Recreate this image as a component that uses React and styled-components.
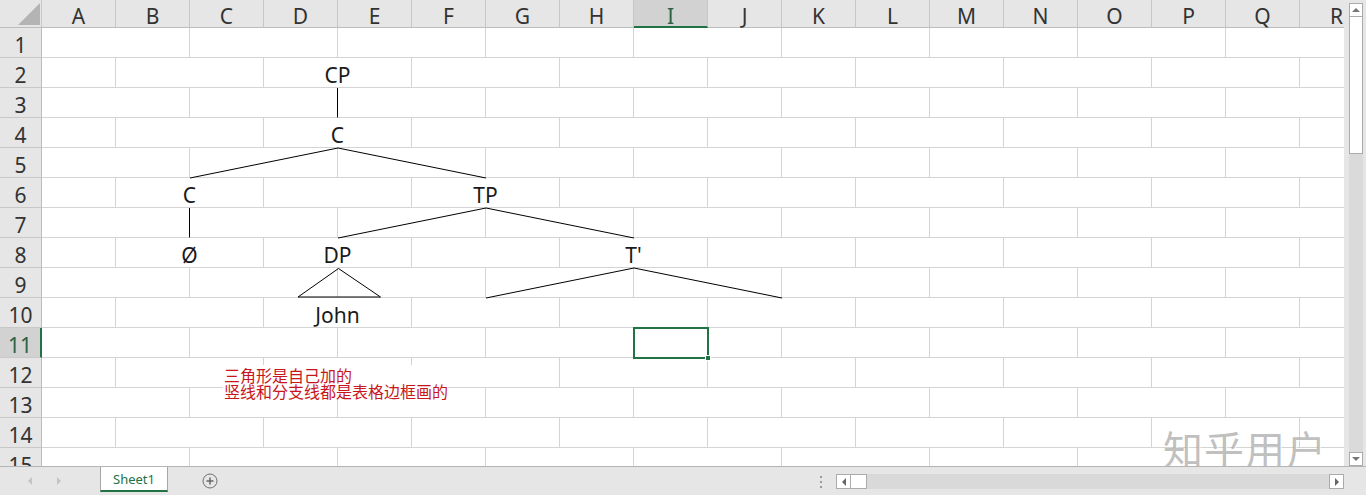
import React from 'react';
import styled, { createGlobalStyle } from 'styled-components';

const GREEN = '#217346';
const GRID = '#d4d4d4';
const HEAD_BG = '#e6e6e6';
const HEAD_SEL = '#d2d2d2';

const GlobalStyle = createGlobalStyle`
  html, body { margin: 0; padding: 0; background: #fff; }
  body { font-family: "Noto Sans", "Noto Sans CJK SC", sans-serif; }
  #root { width: 1366px; height: 495px; overflow: hidden; }
`;

const Root = styled.div`
  width: 1366px;
  height: 495px;
  display: flex;
  flex-direction: column;
  background: ${HEAD_BG};
  overflow: hidden;
`;

const Main = styled.div`
  display: flex;
  height: 466px;
  flex-shrink: 0;
`;

const Sheet = styled.div`
  position: relative;
  width: 1344px;
  height: 466px;
  flex-shrink: 0;
  overflow: hidden;
  background: #fff;
  display: flex;
  flex-direction: column;
`;

const HeaderRow = styled.div`
  display: flex;
  height: 28px;
  flex-shrink: 0;
`;

const Corner = styled.div`
  flex: 0 0 42px;
  height: 28px;
  box-sizing: border-box;
  background: ${HEAD_BG};
  border-right: 1px solid #c6c6c6;
  border-bottom: 1px solid #bdbdbd;
  display: flex;
  align-items: flex-end;
  justify-content: flex-end;
  padding: 0 1px 2px 0;
`;

const ColHead = styled.div`
  flex: 0 0 74px;
  height: 28px;
  box-sizing: border-box;
  background: ${p => (p.$sel ? HEAD_SEL : HEAD_BG)};
  border-right: 1px solid #c6c6c6;
  border-bottom: ${p => (p.$sel ? `2px solid ${GREEN}` : '1px solid #bdbdbd')};
  display: flex;
  align-items: center;
  justify-content: center;
  padding-top: ${p => (p.$sel ? 5 : 4)}px;
  font-size: 21px;
  line-height: 22px;
  color: ${p => (p.$sel ? '#2a6244' : '#333')};
`;

const Row = styled.div`
  display: flex;
  height: 30px;
  flex-shrink: 0;
`;

const RowHead = styled.div`
  flex: 0 0 42px;
  height: 30px;
  box-sizing: border-box;
  background: ${p => (p.$sel ? HEAD_SEL : HEAD_BG)};
  border-right: ${p => (p.$sel ? `2px solid ${GREEN}` : '1px solid #bdbdbd')};
  border-bottom: 1px solid #c8c8c8;
  display: flex;
  align-items: center;
  justify-content: center;
  padding-top: 6px;
  font-size: 21px;
  line-height: 23px;
  color: ${p => (p.$sel ? '#2a6244' : '#333')};
`;

const Cell = styled.div`
  position: relative;
  flex: 0 0 ${p => p.$span * 74}px;
  height: 30px;
  box-sizing: border-box;
  border-right: 1px solid ${p => (p.$edge ? '#000' : GRID)};
  border-bottom: 1px solid ${GRID};
  display: flex;
  align-items: center;
  justify-content: center;
  padding-top: 6px;
  font-size: 21px;
  line-height: 23px;
  color: #1a1a1a;
  white-space: nowrap;
`;

const Diag = styled.svg`
  position: absolute;
  left: 0;
  top: 0;
  width: calc(100% + 1px);
  height: calc(100% + 1px);
  overflow: visible;
  pointer-events: none;
`;

const SelBox = styled.div`
  position: absolute;
  left: 633px;
  top: 327px;
  width: 76px;
  height: 32px;
  box-sizing: border-box;
  border: 2px solid ${GREEN};
  pointer-events: none;
`;

const Handle = styled.div`
  position: absolute;
  left: 705px;
  top: 355px;
  width: 6px;
  height: 6px;
  box-sizing: border-box;
  background: ${GREEN};
  border: 1px solid #fff;
`;

const Shape = styled.svg`
  position: absolute;
  left: 297px;
  top: 268px;
  overflow: visible;
`;

const Note = styled.div`
  position: absolute;
  left: 223px;
  top: 365px;
  width: 225px;
  height: 33px;
  box-sizing: border-box;
  padding: 2px 0 0 1px;
  background: #fff;
  color: #c8161d;
  font-family: "Noto Sans CJK SC", "Noto Sans", sans-serif;
  font-size: 16px;
  line-height: 16px;
  white-space: nowrap;
`;

const Watermark = styled.div`
  position: absolute;
  left: 1163px;
  top: 428px;
  font-family: "Noto Sans CJK SC", sans-serif;
  font-size: 40px;
  line-height: 40px;
  color: rgba(150, 150, 150, 0.6);
  text-shadow: 1px 1px 0 rgba(255, 255, 255, 0.8);
  letter-spacing: 1px;
  pointer-events: none;
`;

/* vertical scrollbar */
const VScroll = styled.div`
  flex: 0 0 22px;
  height: 466px;
  box-sizing: border-box;
  padding: 3px 3px 0 5px;
  display: flex;
  flex-direction: column;
  background: ${HEAD_BG};
`;

const SBtn = styled.div`
  flex: 0 0 ${p => p.$h || 14}px;
  width: ${p => p.$w || 14}px;
  box-sizing: border-box;
  background: #fff;
  border: 1px solid #ababab;
  display: flex;
  align-items: center;
  justify-content: center;
`;

const VTrack = styled.div`
  flex: 1;
  display: flex;
  flex-direction: column;
  background: #dadada;
`;

const VThumb = styled.div`
  flex: 0 0 137px;
  box-sizing: border-box;
  background: #fff;
  border: 1px solid #ababab;
  border-top: none;
`;

const Tri = styled.span`
  width: 0;
  height: 0;
  border-style: solid;
  ${p =>
    p.$dir === 'up'
      ? `border-width: 0 4px 4px 4px; border-color: transparent transparent ${p.$c} transparent;`
      : p.$dir === 'down'
      ? `border-width: 4px 4px 0 4px; border-color: ${p.$c} transparent transparent transparent;`
      : p.$dir === 'left'
      ? `border-width: 4px 4px 4px 0; border-color: transparent ${p.$c} transparent transparent;`
      : `border-width: 4px 0 4px 4px; border-color: transparent transparent transparent ${p.$c};`}
`;

/* bottom bar */
const BottomBar = styled.div`
  height: 29px;
  box-sizing: border-box;
  border-top: 1px solid #b4b4b4;
  display: flex;
  align-items: flex-start;
  background: ${HEAD_BG};
`;

const Nav = styled.div`
  flex: 0 0 100px;
  height: 28px;
  box-sizing: border-box;
  padding-left: 15px;
  display: flex;
  align-items: center;
`;

const NavBtn = styled.div`
  flex: 0 0 29px;
  display: flex;
  justify-content: center;
`;

const Tab = styled.div`
  flex: 0 0 68px;
  height: 25px;
  box-sizing: border-box;
  background: #fff;
  border-left: 1px solid #a6a6a6;
  border-right: 1px solid #a6a6a6;
  border-bottom: 2px solid ${GREEN};
  display: flex;
  align-items: center;
  justify-content: center;
  color: ${GREEN};
  font-size: 13px;
`;

const AddBtn = styled.div`
  margin: 6px 0 0 34px;
  width: 16px;
  height: 16px;
  display: flex;
`;

const Dots = styled.div`
  margin: 9px 14px 0 auto;
  width: 3px;
  display: flex;
  flex-direction: column;
  align-items: center;
  gap: 3px;
`;

const Dot = styled.span`
  width: 2px;
  height: 2px;
  background: #9a9a9a;
`;

const HScroll = styled.div`
  flex: 0 0 508px;
  margin: 7px 22px 0 0;
  height: 15px;
  display: flex;
  background: #d9d9d9;
`;

const HThumb = styled.div`
  flex: 0 0 16px;
  box-sizing: border-box;
  background: #fff;
  border: 1px solid #ababab;
  border-left: none;
`;

const Fill = styled.div`
  flex: 1;
`;

const COLS = 'ABCDEFGHIJKLMNOPQR'.split('');
const ROWS = Array.from({ length: 15 }, (_, i) => i + 1);

const content = {
  2: { 2: 'CP' },
  4: { 2: 'C' },
  6: { 1: 'C', 3: 'TP' },
  8: { 1: 'Ø', 2: 'DP', 4: "T'" },
  10: { 2: 'John' },
};
const edges = { 3: { 1: true }, 7: { 0: true } };
const diags = {
  5: { 1: 'up', 2: 'down' },
  7: { 2: 'up', 3: 'down' },
  9: { 3: 'up', 4: 'down' },
};

function cellsFor(r) {
  const spans = r % 2 === 1 ? Array(9).fill(2) : [1, ...Array(8).fill(2), 2];
  return spans.map((span, k) => ({
    span,
    text: content[r] && content[r][k],
    edge: edges[r] && edges[r][k],
    diag: diags[r] && diags[r][k],
  }));
}

export default function App() {
  return (
    <>
      <GlobalStyle />
      <Root>
        <Main>
          <Sheet>
            <HeaderRow>
              <Corner>
                <svg width="22" height="22" viewBox="0 0 22 22">
                  <polygon points="22,0 22,22 0,22" fill="#b4b4b4" />
                </svg>
              </Corner>
              {COLS.map(c => (
                <ColHead key={c} $sel={c === 'I'}>{c}</ColHead>
              ))}
            </HeaderRow>
            {ROWS.map(r => (
              <Row key={r}>
                <RowHead $sel={r === 11}>{r}</RowHead>
                {cellsFor(r).map((c, k) => (
                  <Cell key={k} $span={c.span} $edge={c.edge}>
                    {c.text}
                    {c.diag && (
                      <Diag viewBox="0 0 148 30" preserveAspectRatio="none">
                        <line
                          x1="0"
                          y1={c.diag === 'up' ? 30 : 0}
                          x2="148"
                          y2={c.diag === 'up' ? 0 : 30}
                          stroke="#000"
                          strokeWidth="1"
                          vectorEffect="non-scaling-stroke"
                        />
                      </Diag>
                    )}
                  </Cell>
                ))}
              </Row>
            ))}
            <Shape width="85" height="31" viewBox="0 0 85 31">
              <polygon points="41.5,0.5 1,29 83.5,29" fill="none" stroke="#000" strokeWidth="1" />
            </Shape>
            <Note>
              三角形是自己加的
              <br />
              竖线和分支线都是表格边框画的
            </Note>
            <SelBox />
            <Handle />
            <Watermark>知乎用户</Watermark>
          </Sheet>
          <VScroll>
            <SBtn>
              <Tri $dir="up" $c="#777" />
            </SBtn>
            <VTrack>
              <VThumb />
            </VTrack>
            <SBtn>
              <Tri $dir="down" $c="#777" />
            </SBtn>
          </VScroll>
        </Main>
        <BottomBar>
          <Nav>
            <NavBtn>
              <Tri $dir="left" $c="#c4c4c4" />
            </NavBtn>
            <NavBtn>
              <Tri $dir="right" $c="#c4c4c4" />
            </NavBtn>
          </Nav>
          <Tab>Sheet1</Tab>
          <AddBtn>
            <svg width="16" height="16" viewBox="0 0 16 16">
              <circle cx="8" cy="8" r="7" fill="none" stroke="#707070" strokeWidth="1" />
              <line x1="8" y1="4.5" x2="8" y2="11.5" stroke="#606060" strokeWidth="1.4" />
              <line x1="4.5" y1="8" x2="11.5" y2="8" stroke="#606060" strokeWidth="1.4" />
            </svg>
          </AddBtn>
          <Dots>
            <Dot />
            <Dot />
            <Dot />
          </Dots>
          <HScroll>
            <SBtn $h={15} $w={14}>
              <Tri $dir="left" $c="#666" />
            </SBtn>
            <HThumb />
            <Fill />
            <SBtn $h={15} $w={14}>
              <Tri $dir="right" $c="#666" />
            </SBtn>
          </HScroll>
        </BottomBar>
      </Root>
    </>
  );
}
